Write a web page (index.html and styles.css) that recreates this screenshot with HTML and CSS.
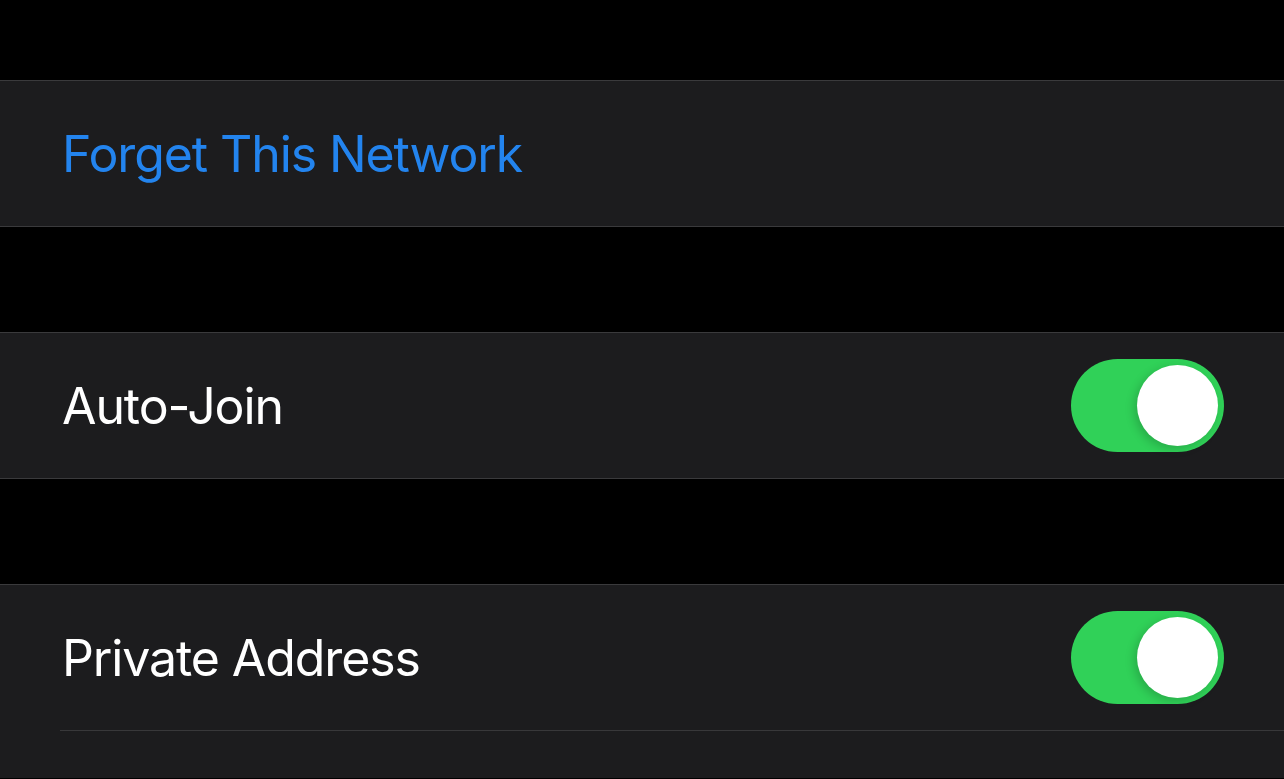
FILE: index.html
```html
<!DOCTYPE html>
<html lang="en">
<head>
<meta charset="UTF-8">
<meta name="viewport" content="width=device-width, initial-scale=1.0">
<title>Wi-Fi Network</title>
<link rel="stylesheet" href="styles.css">
</head>
<body>
<div class="settings">
    <div class="group">
        <div class="row">
            <span class="label link">Forget This Network</span>
        </div>
    </div>

    <div class="group">
        <div class="row">
            <span class="label">Auto-Join</span>
            <div class="toggle on"><div class="knob"></div></div>
        </div>
    </div>

    <div class="group open">
        <div class="row">
            <span class="label">Private Address</span>
            <div class="toggle on"><div class="knob"></div></div>
        </div>
        <div class="row inset"></div>
    </div>
</div>
</body>
</html>
```
FILE: styles.css
```css
/* Global styles */
body {
    font-family: Inter, "Noto Sans", sans-serif;
    margin: 0;
    padding: 0;
    background-color: #000;
    overflow: hidden;
}
.settings {
    display: flex;
    flex-direction: column;
    gap: 105px;
    padding-top: 80px;
}
.group {
    background-color: #1c1c1e;
    border-top: 1px solid #3a3a3c;
    border-bottom: 1px solid #3a3a3c;
}
.group.open {
    border-bottom: none;
}
.row {
    height: 145px;
    display: flex;
    align-items: center;
    justify-content: space-between;
    padding: 0 60px 0 62px;
}
.row.inset {
    height: 47px;
    margin-left: 60px;
    padding-left: 2px;
    border-top: 1px solid #38383a;
}
.label {
    color: #fff;
    font-size: 50px;
    letter-spacing: -1.1px;
}
.link {
    color: #2384ee;
}
.toggle {
    width: 153px;
    height: 93px;
    border-radius: 47px;
    background-color: #30d158;
    position: relative;
}
.knob {
    position: absolute;
    top: 6px;
    right: 6px;
    width: 81px;
    height: 81px;
    border-radius: 50%;
    background-color: #fff;
    box-shadow: -3px 3px 10px rgba(0, 0, 0, 0.18);
}
```
